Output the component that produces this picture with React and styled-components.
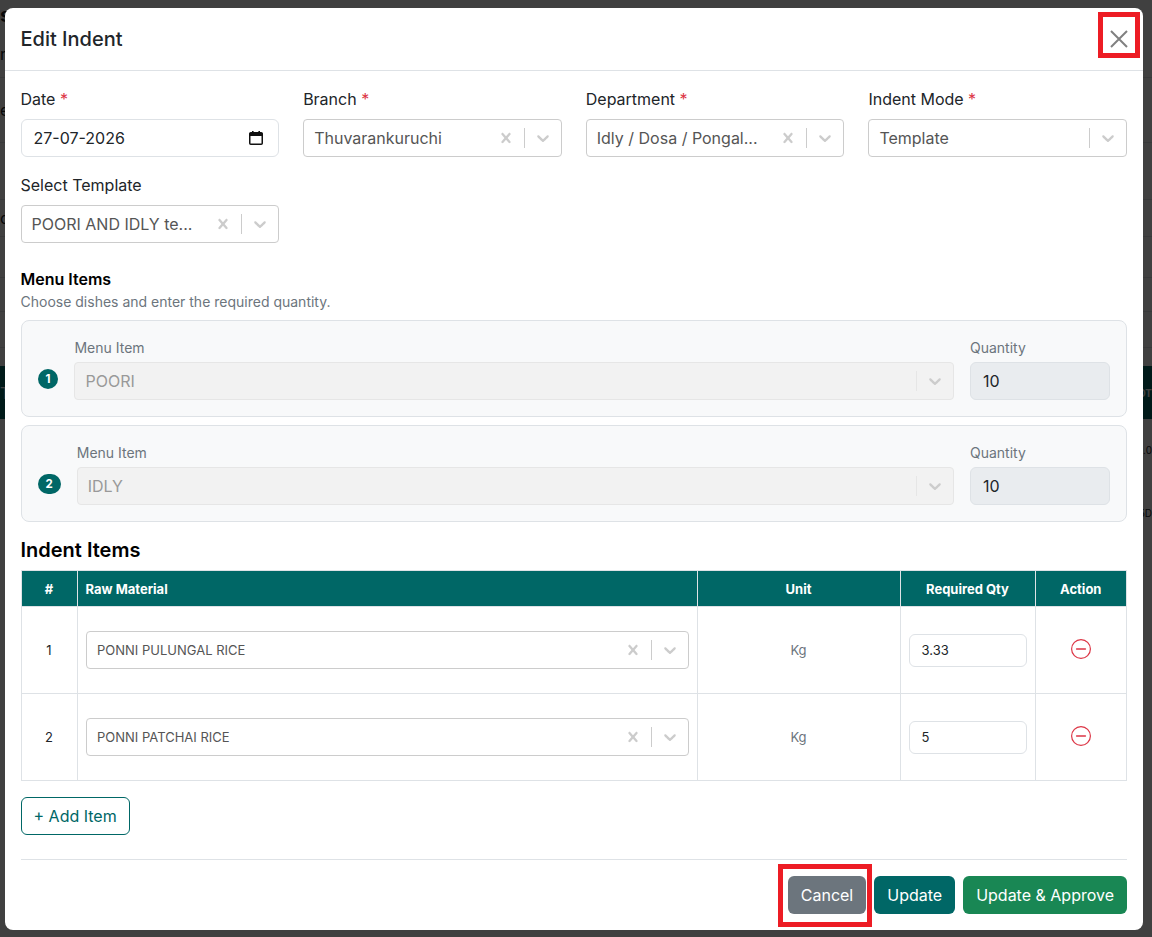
import React from 'react';
import styled, { createGlobalStyle } from 'styled-components';

const GlobalStyle = createGlobalStyle`
  html, body { margin: 0; padding: 0; height: 100%; overflow: hidden; background: #fff; }
  * { box-sizing: border-box; }
  body { font-family: Inter, "Liberation Sans", sans-serif; color: #212529; }
`;

const teal = '#006766';

// page behind the dialog, only its edges show around the modal
const BackPage = styled.div`
  height: 937px;
  overflow: hidden;
  display: flex;
  flex-direction: column;
`;

const BackRow = styled.div`
  height: ${(p) => p.$h}px;
  display: flex;
  align-items: center;
  justify-content: space-between;
  flex: none;
  font-size: ${(p) => (p.$big ? 20 : 16)}px;
  font-weight: ${(p) => (p.$big ? 700 : 400)};
  border-bottom: ${(p) => (p.$line ? '1px solid #dee2e6' : 'none')};
  background: ${(p) => (p.$dark ? teal : 'transparent')};
  color: ${(p) => (p.$dark ? '#fff' : '#212529')};
`;

const BackEnd = styled.span`
  font-size: 10px;
  font-weight: ${(p) => (p.$bold ? 700 : 400)};
  white-space: nowrap;
`;

const Overlay = styled.div`
  position: fixed;
  inset: 0;
  background: rgba(0, 0, 0, 0.75);
  padding: 8px 9px 7px 4.5px;
`;

const Modal = styled.div`
  height: 922px;
  background: #fff;
  border-radius: 8px;
  display: flex;
  flex-direction: column;
`;

const ModalHeader = styled.div`
  height: 63px;
  flex: none;
  padding: 0 15px 0 16px;
  display: flex;
  align-items: center;
  justify-content: space-between;
  border-bottom: 1px solid #dee2e6;
`;

const ModalTitle = styled.h5`
  margin: 0;
  font-size: 20px;
  font-weight: 500;
  color: #212529;
`;

const CloseButton = styled.button`
  position: relative;
  width: 18px;
  height: 18px;
  padding: 0;
  border: none;
  background: none;
  display: flex;
  color: #808080;
`;

const Highlight = styled.span`
  position: absolute;
  top: ${(p) => p.$t}px;
  right: ${(p) => p.$r}px;
  bottom: ${(p) => p.$b}px;
  left: ${(p) => p.$l}px;
  border: 5px solid #ed1c24;
  pointer-events: none;
`;

const ModalBody = styled.div`
  padding: 16px;
  flex: 1;
`;

const FormGrid = styled.div`
  display: grid;
  grid-template-columns: repeat(4, 1fr);
  column-gap: 24px;
  row-gap: 16px;
  margin-bottom: 24px;
`;

const Label = styled.label`
  display: block;
  font-size: 16px;
  line-height: 24px;
  margin-bottom: 8px;
  color: #212529;
`;

const Req = styled.span`
  color: #dc3545;
`;

const DateField = styled.div`
  height: 38px;
  border: 1px solid #dee2e6;
  border-radius: 6px;
  padding: 0 14px 0 12px;
  display: flex;
  align-items: center;
  justify-content: space-between;
  font-size: 16px;
  color: #212529;
`;

const SelectBox = styled.div`
  height: 38px;
  display: flex;
  align-items: center;
  text-align: left;
  border: 1px solid ${(p) => (p.$disabled ? '#e6e6e6' : '#ccc')};
  border-radius: 4px;
  background: ${(p) => (p.$disabled ? '#f2f2f2' : '#fff')};
`;

const SelectValue = styled.div`
  flex: 1;
  min-width: 0;
  padding-left: ${(p) => (p.$small ? 10.5 : 10)}px;
  font-size: ${(p) => (p.$small ? 13 : 16)}px;
  color: ${(p) => (p.$disabled ? '#999' : '#555')};
  white-space: nowrap;
  overflow: hidden;
`;

const Indicator = styled.div`
  width: 36px;
  height: 36px;
  flex: none;
  display: flex;
  align-items: center;
  justify-content: center;
  color: #ccc;
`;

const Separator = styled.span`
  width: 1px;
  height: 20px;
  flex: none;
  background: ${(p) => (p.$disabled ? '#e6e6e6' : '#ccc')};
`;

const SectionTitle = styled.div`
  font-size: 16px;
  line-height: 24px;
  font-weight: 600;
  color: #000;
`;

const SectionHint = styled.div`
  font-size: 14px;
  line-height: 20px;
  margin: 1px 0 8px;
  color: #6c757d;
`;

const MenuCard = styled.div`
  height: 97px;
  margin-bottom: 8px;
  padding: 0 16px;
  display: flex;
  align-items: center;
  gap: 16px;
  background: #f8f9fa;
  border: 1px solid #dee2e6;
  border-radius: 8px;
`;

const CountBadge = styled.span`
  flex: none;
  height: 20px;
  margin-top: 21px;
  padding: 0 8px;
  border-radius: 10px;
  background: ${teal};
  color: #fff;
  font-size: 11.5px;
  font-weight: 700;
  line-height: 20px;
`;

const MenuField = styled.div`
  flex: 1;
  min-width: 0;
`;

const QtyField = styled.div`
  width: 140px;
  flex: none;
`;

const SmallLabel = styled.div`
  font-size: 14px;
  line-height: 21px;
  margin-bottom: 4px;
  color: #6c757d;
`;

const QtyReadonly = styled.div`
  height: 38px;
  padding: 0 12px;
  display: flex;
  align-items: center;
  font-size: 16px;
  color: #212529;
  background: #e9ecef;
  border: 1px solid #dee2e6;
  border-radius: 6px;
`;

const ItemsTitle = styled.h5`
  margin: 16px 0 8px;
  font-size: 20px;
  line-height: 24px;
  font-weight: 600;
  color: #000;
`;

const Table = styled.table`
  width: 1105.5px;
  table-layout: fixed;
  border-collapse: collapse;
`;

const Th = styled.th`
  width: ${(p) => p.$w}px;
  height: 36px;
  padding: 0 8px;
  background: ${teal};
  color: #fff;
  font-size: 13px;
  font-weight: 700;
  text-align: ${(p) => (p.$left ? 'left' : 'center')};
  border: 1px solid #dee2e6;
`;

const Td = styled.td`
  height: 87px;
  padding: 0 8px;
  font-size: 13px;
  text-align: center;
  color: ${(p) => (p.$muted ? '#6c757d' : '#212529')};
  border: 1px solid #dee2e6;
`;

const QtyInput = styled.div`
  height: 33px;
  padding: 0 12px;
  display: flex;
  align-items: center;
  font-size: 13px;
  color: #212529;
  background: #fff;
  border: 1px solid #dee2e6;
  border-radius: 6px;
`;

const RemoveButton = styled.button`
  border: none;
  background: none;
  padding: 0;
  display: block;
  margin: 0 auto;
  color: #dc3545;
`;

const AddButton = styled.button`
  display: block;
  height: 38px;
  margin-top: 16px;
  padding: 0 12px;
  background: #fff;
  border: 1px solid ${teal};
  border-radius: 6px;
  color: ${teal};
  font-family: inherit;
  font-size: 16px;
`;

const Footer = styled.div`
  margin-top: 24px;
  padding-top: 16px;
  border-top: 1px solid #dee2e6;
  display: flex;
  justify-content: flex-end;
  gap: 8px;
`;

const ActionButton = styled.button`
  position: relative;
  height: 38px;
  padding: 0 13px;
  border: none;
  border-radius: 6px;
  background: ${(p) => p.$bg};
  color: #fff;
  font-family: inherit;
  font-size: 16px;
`;

const ClearIcon = () => (
  <svg width="20" height="20" viewBox="0 0 20 20" fill="currentColor">
    <path d="M14.348 14.849c-0.469 0.469-1.229 0.469-1.697 0l-2.651-3.030-2.651 3.029c-0.469 0.469-1.229 0.469-1.697 0-0.469-0.469-0.469-1.229 0-1.697l2.758-3.15-2.759-3.152c-0.469-0.469-0.469-1.228 0-1.697s1.228-0.469 1.697 0l2.652 3.031 2.651-3.031c0.469-0.469 1.228-0.469 1.697 0s0.469 1.229 0 1.697l-2.758 3.152 2.758 3.15c0.469 0.469 0.469 1.229 0 1.698z" />
  </svg>
);

const ChevronIcon = () => (
  <svg width="20" height="20" viewBox="0 0 20 20" fill="currentColor">
    <path d="M4.516 7.548c0.436-0.446 1.043-0.481 1.576 0l3.908 3.747 3.908-3.747c0.533-0.481 1.141-0.446 1.576 0 0.436 0.445 0.408 1.197 0 1.615-0.406 0.418-4.695 4.502-4.695 4.502-0.217 0.223-0.502 0.335-0.789 0.335s-0.572-0.112-0.791-0.335c0 0-4.287-4.084-4.695-4.502s-0.436-1.17 0-1.615z" />
  </svg>
);

const CalendarIcon = () => (
  <svg width="16" height="16" viewBox="0 0 16 16" fill="none">
    <rect x="1.75" y="2.75" width="12.5" height="11.5" rx="1" stroke="#111" strokeWidth="1.5" />
    <rect x="1.5" y="3" width="13" height="3" fill="#111" />
    <rect x="4" y="1" width="1.6" height="2.5" fill="#111" />
    <rect x="10.4" y="1" width="1.6" height="2.5" fill="#111" />
  </svg>
);

const CloseIcon = () => (
  <svg width="18" height="18" viewBox="0 0 18 18" fill="none" stroke="currentColor" strokeWidth="2">
    <path d="M1 1 L17 17 M17 1 L1 17" />
  </svg>
);

const MinusCircleIcon = () => (
  <svg width="20" height="20" viewBox="0 0 20 20" fill="none" stroke="currentColor">
    <circle cx="10" cy="10" r="9.4" strokeWidth="1.2" />
    <path d="M5.6 10 H14.4" strokeWidth="1.4" strokeLinecap="round" />
  </svg>
);

const Select = ({ value, clearable, disabled, small }) => (
  <SelectBox $disabled={disabled}>
    <SelectValue $disabled={disabled} $small={small}>{value}</SelectValue>
    {clearable && <Indicator><ClearIcon /></Indicator>}
    <Separator $disabled={disabled} />
    <Indicator><ChevronIcon /></Indicator>
  </SelectBox>
);

const menuItems = [
  { id: 1, name: 'POORI', qty: '10' },
  { id: 2, name: 'IDLY', qty: '10' },
];

const indentItems = [
  { id: 1, name: 'PONNI PULUNGAL RICE', unit: 'Kg', qty: '3.33' },
  { id: 2, name: 'PONNI PATCHAI RICE', unit: 'Kg', qty: '5' },
];

const App = () => (
  <>
    <GlobalStyle />
    <BackPage>
      <BackRow $h={30} $big><span>s</span></BackRow>
      <BackRow $h={48} $line><span>r</span></BackRow>
      <BackRow $h={65} $line><span>e</span></BackRow>
      <BackRow $h={57} $line />
      <BackRow $h={37} $line><span>o</span></BackRow>
      <BackRow $h={41} $line />
      <BackRow $h={34} $line />
      <BackRow $h={36} $line />
      <BackRow $h={18} />
      <BackRow $h={53} $dark>
        <span>T</span>
        <BackEnd $bold>OT</BackEnd>
      </BackRow>
      <BackRow $h={62}>
        <span />
        <BackEnd>0.0</BackEnd>
      </BackRow>
      <BackRow $h={64}>
        <span />
        <BackEnd>5D</BackEnd>
      </BackRow>
    </BackPage>

    <Overlay>
      <Modal>
        <ModalHeader>
          <ModalTitle>Edit Indent</ModalTitle>
          <CloseButton aria-label="Close">
            <CloseIcon />
            <Highlight $t={-18} $r={-12} $b={-10} $l={-12} />
          </CloseButton>
        </ModalHeader>

        <ModalBody>
          <FormGrid>
            <div>
              <Label>Date <Req>*</Req></Label>
              <DateField>
                27-07-2026
                <CalendarIcon />
              </DateField>
            </div>
            <div>
              <Label>Branch <Req>*</Req></Label>
              <Select value="Thuvarankuruchi" clearable />
            </div>
            <div>
              <Label>Department <Req>*</Req></Label>
              <Select value="Idly / Dosa / Pongal..." clearable />
            </div>
            <div>
              <Label>Indent Mode <Req>*</Req></Label>
              <Select value="Template" />
            </div>
            <div>
              <Label>Select Template</Label>
              <Select value="POORI AND IDLY te..." clearable />
            </div>
          </FormGrid>

          <SectionTitle>Menu Items</SectionTitle>
          <SectionHint>Choose dishes and enter the required quantity.</SectionHint>

          {menuItems.map((item) => (
            <MenuCard key={item.id}>
              <CountBadge>{item.id}</CountBadge>
              <MenuField>
                <SmallLabel>Menu Item</SmallLabel>
                <Select value={item.name} disabled />
              </MenuField>
              <QtyField>
                <SmallLabel>Quantity</SmallLabel>
                <QtyReadonly>{item.qty}</QtyReadonly>
              </QtyField>
            </MenuCard>
          ))}

          <ItemsTitle>Indent Items</ItemsTitle>
          <Table>
            <thead>
              <tr>
                <Th $w={56}>#</Th>
                <Th $w={620} $left>Raw Material</Th>
                <Th $w={203}>Unit</Th>
                <Th $w={135}>Required Qty</Th>
                <Th $w={91.5}>Action</Th>
              </tr>
            </thead>
            <tbody>
              {indentItems.map((row) => (
                <tr key={row.id}>
                  <Td>{row.id}</Td>
                  <Td>
                    <Select value={row.name} clearable small />
                  </Td>
                  <Td $muted>{row.unit}</Td>
                  <Td>
                    <QtyInput>{row.qty}</QtyInput>
                  </Td>
                  <Td>
                    <RemoveButton aria-label="Remove">
                      <MinusCircleIcon />
                    </RemoveButton>
                  </Td>
                </tr>
              ))}
            </tbody>
          </Table>

          <AddButton>+ Add Item</AddButton>

          <Footer>
            <ActionButton $bg="#6c757d">
              Cancel
              <Highlight $t={-12} $r={-6} $b={-13} $l={-10} />
            </ActionButton>
            <ActionButton $bg={teal}>Update</ActionButton>
            <ActionButton $bg="#198754">Update &amp; Approve</ActionButton>
          </Footer>
        </ModalBody>
      </Modal>
    </Overlay>
  </>
);

export default App;
